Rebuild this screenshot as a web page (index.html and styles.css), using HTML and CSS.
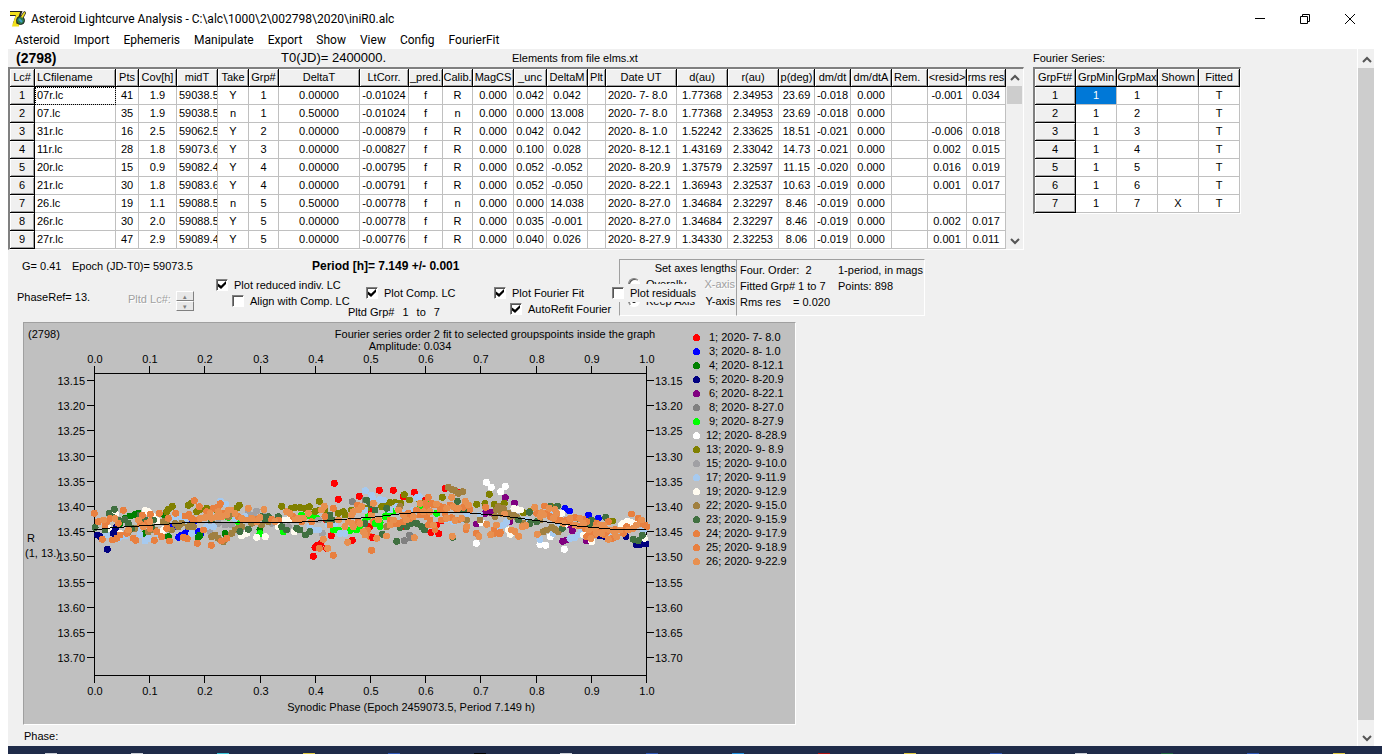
FILE: index.html
```html
<!DOCTYPE html>
<html lang="en">
<head>
<meta charset="utf-8">
<title>Asteroid Lightcurve Analysis</title>
<link rel="stylesheet" href="styles.css">
</head>
<body>
<div class="window">
  <header class="titlebar">
    <svg class="app-icon" viewBox="0 0 16 16" aria-hidden="true">
      <path d="M0 2.500h9L5 14" fill="none" stroke="#222" stroke-width="5"/>
      <path d="M0 2.500h8L4 14h5" fill="none" stroke="#f2e01c" stroke-width="3"/>
      <circle cx="10.500" cy="9.500" r="4" fill="#2c7a4b" stroke="#222"/>
      <path d="M9 8l3 3" stroke="#3fa0c8" stroke-width="2"/>
      <path d="M10.500 6l3.500-5.500 2 1L13 7" fill="#f2e01c" stroke="#222" stroke-width=".8"/>
    </svg>
    <h1 class="title">Asteroid Lightcurve Analysis - C:\alc\1000\2\002798\2020\iniR0.alc</h1>
    <div class="window-buttons">
      <button type="button" aria-label="Minimize"><svg viewBox="0 0 12 12"><path d="M1 5.500h10"/></svg></button>
      <button type="button" aria-label="Restore"><svg viewBox="0 0 12 12"><path d="M1.500 3.500h7v7h-7zM3.500 3.500v-2h7v7h-2"/></svg></button>
      <button type="button" aria-label="Close"><svg viewBox="0 0 12 12"><path d="M1 1l10 10M11 1L1 11"/></svg></button>
    </div>
  </header>
  <nav class="menubar">
    <button type="button">Asteroid</button><button type="button">Import</button><button type="button">Ephemeris</button><button type="button">Manipulate</button><button type="button">Export</button><button type="button">Show</button><button type="button">View</button><button type="button">Config</button><button type="button">FourierFit</button>
  </nav>
  <div class="client">
    <main class="content">
      <div class="tables">
        <section class="curves">
          <div class="heading">
            <strong class="object">(2798)</strong>
            <span class="epoch-zero">T0(JD)= 2400000.</span>
            <span>Elements from file elms.xt</span>
          </div>
          <div class="grid-frame">
            <table class="grid" id="curves"></table>
            <div class="scroll">
              <svg viewBox="0 0 17 17"><path d="M5 11l4-4 4 4"/></svg>
              <i class="short-thumb"></i>
              <svg viewBox="0 0 17 17"><path d="M5 7l4 4 4-4"/></svg>
            </div>
          </div>
        </section>
        <section class="series">
          <div class="heading">Fourier Series:</div>
          <div class="grid-frame">
            <table class="grid" id="series"></table>
          </div>
        </section>
      </div>

      <div class="controls">
        <div class="options">
          <div class="facts">
            <span>G= 0.41</span>
            <span>Epoch (JD-T0)= 59073.5</span>
            <strong class="period">Period [h]= 7.149 +/- 0.001</strong>
          </div>
          <div class="option-columns">
            <div class="phase-ref">
              <span class="ref">PhaseRef= 13.</span>
              <span class="disabled">Pltd Lc#:</span>
              <span class="spinner">
                <button type="button" disabled aria-label="Next curve">▴</button>
                <button type="button" disabled aria-label="Previous curve">▾</button>
              </span>
            </div>
            <div class="reduced">
              <label><input type="checkbox" checked>Plot reduced indiv. LC</label>
              <label class="sub"><input type="checkbox">Align with Comp. LC</label>
            </div>
            <div class="comp">
              <label class="inset"><input type="checkbox" checked>Plot Comp. LC</label>
              <span class="range"><span>Pltd Grp#</span><span>1</span><span>to</span><span>7</span></span>
            </div>
            <div class="fit">
              <label><input type="checkbox" checked>Plot Fourier Fit</label>
              <label class="sub"><input type="checkbox" checked>AutoRefit Fourier</label>
            </div>
          </div>
        </div>
        <fieldset class="axes">
          <div class="axes-title">Set axes lengths</div>
          <div class="axes-row"><label><input type="radio" name="axes">Overally</label><span class="disabled">X-axis</span></div>
          <div class="axes-row"><label><input type="radio" name="axes" checked>Keep Axis</label><span>Y-axis</span></div>
          <label class="residuals"><input type="checkbox">Plot residuals</label>
        </fieldset>
        <div class="summary">
          <span>Four. Order:&nbsp; 2</span><span>1-period, in mags</span>
          <span>Fitted Grp# 1 to 7</span><span>Points: 898</span>
          <span class="rms"><span>Rms res</span><span>= 0.020</span></span>
        </div>
      </div>

      <svg class="chart" id="chart" width="771" height="401" viewBox="0 0 771 401" role="img" aria-label="Composite lightcurve of 2798">
        <text x="4" y="15">(2798)</text>
        <text x="471" y="15" class="mid">Fourier series order 2 fit to selected groupspoints inside the graph</text>
        <text x="386" y="27" class="mid">Amplitude: 0.034</text>
        <text x="387" y="388" class="mid">Synodic Phase (Epoch 2459073.5, Period 7.149 h)</text>
        <text x="3" y="219">R</text>
        <text x="1" y="234">(1, 13.)</text>
        <g id="axes"></g>
        <g id="dots-left" transform="translate(61 157) scale(.3333)"></g>
        <g id="dots-right" transform="translate(346 147) scale(.3333)"></g>
        <path class="line" d="M70 207L86 205 115 203 145 201 171 199 278 199 310 197 351 194 375 191 399 189 425 189 446 190 479 193 523 199 553 203 586 206 622 206"/>
        <g id="legend"></g>
      </svg>
      <div class="status">Phase:</div>
    </main>
    <div class="scroll main-scroll">
      <svg viewBox="0 0 17 17"><path d="M5 11l4-4 4 4"/></svg>
      <i class="long-thumb"></i>
      <svg viewBox="0 0 17 17"><path d="M5 7l4 4 4-4"/></svg>
    </div>
  </div>
  <footer class="taskbar">
    <i class="pale"></i><i class="pale"></i><i class="cyan"></i><i class="gold"></i><i class="blue"></i><i class="black"></i><i class="pale"></i><i class="blue"></i><i class="sky"></i><i class="red"></i><i class="gold"></i><i class="blue"></i><i class="pale"></i><i class="green"></i><i class="blue"></i><i class="gold"></i>
  </footer>
</div>
<script src="app.js"></script>
</body>
</html>
```
FILE: styles.css
```css
* { box-sizing: border-box; }
body {
  margin: 0;
  background: #fff;
  color: #000;
  font: 11px/16px "Liberation Sans", Arial, sans-serif;
}
button { font: inherit; color: inherit; border: 0; padding: 0; background: none; }
.window { display: flex; flex-direction: column; height: 100vh; overflow: hidden; }

.titlebar { display: flex; align-items: center; flex: none; height: 32px; padding: 6px 10px 0; }
.app-icon { width: 16px; height: 16px; margin-right: 5px; }
.title { flex: 1; margin: 0; font: 12px/16px Roboto, "Noto Sans", sans-serif; white-space: nowrap; }
.window-buttons { display: flex; }
.window-buttons button { width: 45px; height: 20px; display: grid; place-items: center; }
.window-buttons svg { width: 12px; height: 12px; fill: none; stroke: #000; }
.menubar { display: flex; flex: none; gap: 14px; height: 17px; padding: 0 15px; font: 12px/17px Roboto, "Noto Sans", sans-serif; }

.client { display: flex; flex: 1; min-height: 0; margin: 0 8px; background: #f0f0f0; }
.content { flex: 1; min-width: 0; overflow: hidden; white-space: nowrap; }
.scroll { display: flex; flex-direction: column; flex: none; width: 17px; background: #f0f0f0; }
.scroll svg { width: 17px; height: 17px; fill: none; stroke: #555; stroke-width: 2; }
.scroll svg:last-child { margin-top: auto; }
.short-thumb { height: 18px; margin: 0 1px; background: #cdcdcd; }
.main-scroll { padding-top: 2px; border-left: 1px solid #fff; }
.long-thumb { flex: 1; margin-bottom: 9px; background: #cdcdcd; }

.tables { display: flex; align-items: flex-start; gap: 9px; }
.heading { display: flex; align-items: center; height: 18px; }
.curves .heading { padding-left: 8px; }
.object { width: 265px; font-size: 14px; }
.epoch-zero { width: 231px; font-size: 13px; }
.grid-frame { display: flex; width: max-content; border: solid #fff; border-width: 2px 1px 1px 2px; border-top-color: #808080; border-left-color: #808080; background: #fff; }
.grid { table-layout: fixed; border-collapse: separate; border-spacing: 0; width: max-content; }
.grid th, .grid td { height: 18px; padding: 0; overflow: hidden; font-weight: 400; line-height: 17px; text-align: center; white-space: pre; }
.grid td { border: solid #c0c0c0; border-width: 0 1px 1px 0; }
.grid th { border: solid #000; border-width: 0 1px 1px 0; background: #f0f0f0; box-shadow: inset 1px 1px #fff, inset -1px -1px #a0a0a0; }
.grid .left { padding-left: 2px; text-align: left; }
.grid .focus { outline: 1px dotted #000; outline-offset: -1px; }
.grid .selected { background: #0078d7; color: #fff; }

.controls { display: flex; align-items: flex-start; height: 72px; }
.options { width: 611px; padding-top: 8px; }
.facts { display: grid; grid-template-columns: 50px 240px auto; padding-left: 14px; }
.period { font-size: 12px; }
.option-columns { display: flex; margin-top: 3px; }
.phase-ref { display: flex; width: 208px; padding: 12px 0 0 9px; }
.ref { width: 111px; }
.disabled { color: #a0a0a0; text-shadow: 1px 1px #fff; }
.phase-ref .disabled { width: 48px; padding-top: 2px; }
.spinner { display: grid; width: 18px; height: 20px; margin-top: 2px; }
.spinner button { height: 10px; border: 1px solid; border-color: #fff #808080 #808080 #fff; background: #e8e8e8; color: #808080; font-size: 7px; line-height: 7px; }
.reduced { width: 132px; }
.comp { width: 146px; padding-top: 8px; }
.fit { padding-top: 8px; }
label { display: flex; align-items: center; gap: 6px; height: 16px; }
.sub { margin-left: 16px; }
.inset { margin-left: 18px; }
.range { display: flex; gap: 8px; margin-top: 3px; }
input { flex: none; appearance: none; width: 12px; height: 12px; margin: 0; border: 1px solid; border-color: #808080 #fff #fff #808080; background: #fff; box-shadow: inset 1px 1px #555; }
input[type="checkbox"]:checked::before { content: ""; display: block; width: 8px; height: 8px; margin: 1px; background: #000; clip-path: polygon(0 30%, 38% 60%, 100% 0, 100% 38%, 38% 100%, 0 68%); }
input[type="radio"] { border-radius: 50%; }
input[type="radio"]:checked::before { content: ""; display: block; width: 4px; height: 4px; margin: 3px; border-radius: 50%; background: #000; }
.axes { position: relative; width: 117px; height: 57px; min-width: 0; margin: 9px 0 0; padding: 0; border: solid #fff; border-width: 1px 0 1px 1px; border-top-color: #a0a0a0; border-left-color: #a0a0a0; }
.axes-title { height: 16px; text-align: right; }
.axes-row { display: flex; justify-content: space-between; height: 17px; padding: 0 1px 0 8px; }
.residuals { position: absolute; left: -8px; top: 24px; width: 84px; height: 18px; background: #f0f0f0; }
.summary { display: grid; grid-template-columns: 98px auto; align-content: start; height: 57px; margin-top: 9px; padding: 2px 1px 0 3px; border: 1px solid #fff; border-top-color: #a0a0a0; border-left-color: #a0a0a0; }
.rms { display: grid; grid-template-columns: 53px auto; }

.chart { display: block; box-sizing: content-box; margin-left: 15px; border: 1px solid #fff; border-top-color: #a0a0a0; border-left-color: #a0a0a0; background: #c0c0c0; white-space: pre; }
.mid { text-anchor: middle; }
.end { text-anchor: end; }
.line { fill: none; stroke: #000; shape-rendering: crispEdges; }
.dots { fill: none; stroke-width: 21; stroke-linecap: round; shape-rendering: crispEdges; }
.legend-dot { shape-rendering: crispEdges; }
.status { padding: 3px 0 0 16px; }

.taskbar { display: flex; align-items: flex-end; justify-content: space-around; flex: none; height: 8px; margin-left: 8px; background: #1f2b49; }
.taskbar i { width: 12px; height: 1px; }
.pale { background: #c8ccd4; }
.cyan { background: #38c4d8; }
.gold { background: #e0c840; }
.blue { background: #3058b8; }
.black { background: #000; }
.sky { background: #2090e0; }
.red { background: #b01010; }
.green { background: #206840; }
```
FILE: app.js
```js
const curveColumns = [
  ['Lc#', 25], ['LCfilename', 81, 1], ['Pts', 23], ['Cov[h]', 38], ['midT', 41], ['Take', 31], ['Grp#', 30],
  ['DeltaT', 81], ['LtCorr.', 49], ['_pred.', 34], ['Calib.', 30], ['MagCS', 41], ['_unc', 33], ['DeltaM', 41],
  ['Plt', 18], ['Date UT', 71], ['d(au)', 51], ['r(au)', 51], ['p(deg)', 36], ['dm/dt', 36], ['dm/dtA', 41],
  ['Rem.', 36, 1], ['<resid>', 39], ['rms res', 39]
];
const curveRows = `
1|07r.lc|41|1.9|59038.5|Y|1|0.00000|-0.01024|f|R|0.000|0.042|0.042||2020- 7- 8.0|1.77368|2.34953|23.69|-0.018|0.000||-0.001|0.034
2|07.lc|35|1.9|59038.5|n|1|0.50000|-0.01024|f|n|0.000|0.000|13.008||2020- 7- 8.0|1.77368|2.34953|23.69|-0.018|0.000|||
3|31r.lc|16|2.5|59062.5|Y|2|0.00000|-0.00879|f|R|0.000|0.042|0.042||2020- 8- 1.0|1.52242|2.33625|18.51|-0.021|0.000||-0.006|0.018
4|11r.lc|28|1.8|59073.6|Y|3|0.00000|-0.00827|f|R|0.000|0.100|0.028||2020- 8-12.1|1.43169|2.33042|14.73|-0.021|0.000||0.002|0.015
5|20r.lc|15|0.9|59082.4|Y|4|0.00000|-0.00795|f|R|0.000|0.052|-0.052||2020- 8-20.9|1.37579|2.32597|11.15|-0.020|0.000||0.016|0.019
6|21r.lc|30|1.8|59083.6|Y|4|0.00000|-0.00791|f|R|0.000|0.052|-0.050||2020- 8-22.1|1.36943|2.32537|10.63|-0.019|0.000||0.001|0.017
7|26.lc|19|1.1|59088.5|n|5|0.50000|-0.00778|f|n|0.000|0.000|14.038||2020- 8-27.0|1.34684|2.32297|8.46|-0.019|0.000|||
8|26r.lc|30|2.0|59088.5|Y|5|0.00000|-0.00778|f|R|0.000|0.035|-0.001||2020- 8-27.0|1.34684|2.32297|8.46|-0.019|0.000||0.002|0.017
9|27r.lc|47|2.9|59089.4|Y|5|0.00000|-0.00776|f|R|0.000|0.040|0.026||2020- 8-27.9|1.34330|2.32253|8.06|-0.019|0.000||0.001|0.011`;
const seriesColumns = [['GrpFt#', 41], ['GrpMin', 41], ['GrpMax', 41], ['Shown', 41], ['Fitted', 41]];
const seriesRows = '1|1|1||T\n2|1|2||T\n3|1|3||T\n4|1|4||T\n5|1|5||T\n6|1|6||T\n7|1|7|X|T';

const leftAligned = new Set(['LCfilename', 'midT', 'Date UT', 'Rem.']);
const escape = s => s.replace(/</g, '&lt;').replace(/>/g, '&gt;');

function fillTable(id, columns, rows, activeClass) {
  const cols = columns.map(c => `<col style="width:${c[1]}px">`).join('');
  const head = columns.map(c => `<th scope="col"${c[2] ? ' class="left"' : ''}>${escape(c[0])}</th>`).join('');
  const body = rows.trim().split('\n').map((row, r) => '<tr>' + row.split('|').map((v, i) => {
    if (i === 0) return `<th scope="row">${v}</th>`;
    const names = [leftAligned.has(columns[i][0]) ? 'left' : '', r === 0 && i === 1 ? activeClass : ''].join(' ').trim();
    return `<td${names ? ` class="${names}"` : ''}>${v}</td>`;
  }).join('') + '</tr>').join('');
  const table = document.getElementById(id);
  table.style.width = columns.reduce((sum, c) => sum + c[1], 0) + 'px';
  table.innerHTML = `<colgroup>${cols}</colgroup><thead><tr>${head}</tr></thead><tbody>${body}</tbody>`;
}
fillTable('curves', curveColumns, curveRows, 'focus');
fillTable('series', seriesColumns, seriesRows, 'selected');

/* Axes: frame, ticks and tick labels */
let axes = '<path class="line" d="M70.500 50.500h552v302h-552z"/>';
for (let i = 0; i <= 10; i++) {
  const x = Math.round(70 + i * 55.2);
  const label = (i / 10).toFixed(1);
  axes += `<path class="line" d="M${x + 0.5} 43v7M${x + 0.5} 352v8"/><text class="mid" x="${x + 1}" y="40">${label}</text><text class="mid" x="${x + 1}" y="372">${label}</text>`;
}
for (let i = 0; i < 12; i++) {
  const y = Math.round(57 + i * 25.2);
  const label = (13.15 + i * 0.05).toFixed(2);
  axes += `<path class="line" d="M63 ${y + 0.5}h7M623 ${y + 0.5}h7"/><text class="end" x="61" y="${y + 5}">${label}</text><text x="631" y="${y + 5}">${label}</text>`;
}
document.getElementById('axes').innerHTML = axes;

const legend = [
  ['#f00', ' 1; 2020- 7- 8.0'], ['#00f', ' 3; 2020- 8- 1.0'], ['#008000', ' 4; 2020- 8-12.1'],
  ['#000080', ' 5; 2020- 8-20.9'], ['#800080', ' 6; 2020- 8-22.1'], ['#808080', ' 8; 2020- 8-27.0'],
  ['#0f0', ' 9; 2020- 8-27.9'], ['#fff', '12; 2020- 8-28.9'], ['#808000', '13; 2020- 9- 8.9'],
  ['#a0a0a4', '15; 2020- 9-10.0'], ['#a6caf0', '17; 2020- 9-11.9'], ['#fffbf0', '19; 2020- 9-12.9'],
  ['#a08040', '22; 2020- 9-15.0'], ['#407040', '23; 2020- 9-15.9'], ['#e88040', '24; 2020- 9-17.9'],
  ['#e88040', '25; 2020- 9-18.9'], ['#e89050', '26; 2020- 9-22.9']
];
document.getElementById('legend').innerHTML = legend.map(([color, text], i) => {
  const y = 14 + i * 14;
  return `<circle class="legend-dot" cx="672.5" cy="${y + 0.5}" r="3.5" fill="${color}"/><text x="${text[0] === ' ' ? 685 : 682}" y="${y + 4}">${text.trim()}</text>`;
}).join('');

/* Observations by colour, as "x,y" pairs in thirds of a pixel */
const left = [
  ['#f00', '748,10 760,58 823,49 739,167 802,181 685,229 698,195 708,190 725,205 862,173 850,90 725,120 855,140 690,202'],
  ['#00f', '265,140 281,172 300,160 310,150 320,130 328,122 340,155 347,160 290,165'],
  ['#008000', '120,115 135,108 150,104 160,100 105,130 180,160 240,110 345,165 340,172 420,160 525,148 250,170'],
  ['#000080', '67,208 38,165 45,170 85,160 90,150 93,143'],
  ['#808080', '802,65 840,60'],
  ['#0f0', '405,110 430,112 460,125 525,160 590,125 595,155 650,105 665,108 680,113 695,115 745,150 760,150 795,152 815,150 825,145 840,125 850,110 470,150'],
  ['#808000', '250,88 262,79 310,76 318,70 347,88 245,95 365,85 335,95 395,90 463,76 455,85 590,79 618,86 630,82 645,83 673,80 660,85 703,64 705,90 690,95 720,88 760,100 775,95 800,90 820,85 780,105 845,85'],
  ['#a0a0a4', '515,93 375,155 380,135 400,130 420,135 485,150 540,110 560,130 610,140 700,120 712,160 490,100 440,135 505,105 590,135'],
  ['#a6caf0', '406,63 421,72 841,32 180,183 190,175 150,178 220,160 120,168 65,165 290,110 270,115 300,125 365,140 385,140 480,110 500,120 700,150 675,140 690,150 765,160 780,160 860,45 840,90 320,160 450,115 100,175 160,145 165,165 730,135 750,130'],
  ['#fffbf0', '75,100 92,102 190,95 217,122 237,148 70,145 180,92 230,155 205,110 470,168 515,172 541,170 485,160 600,120 628,155 580,140 612,118 105,160'],
  ['#a08040', '235,125 290,130 310,140 320,135 390,165 400,175 440,160 450,150 470,140 445,100 430,110 260,150 380,170 415,185 530,135 550,125 170,130 210,150 280,140 325,140 130,155 500,130 245,130 270,130 150,145 190,155 460,145'],
  ['#407040', '88,88 72,100 30,142 80,110 165,105 120,118 100,120 140,145 205,120 180,120 60,150 490,148 465,155 550,110 580,110 570,120 590,140 605,150 635,145 645,150 662,165 675,155 735,105 725,118 743,120 845,60 855,70 840,130 380,120 530,110 540,120 130,130 200,140'],
  ['#e88040', '28,100 115,91 172,106 196,103 223,100 328,62 343,80 406,71 337,190 379,196 253,183 208,181 152,181 83,180 52,178 355,150 272,100 250,115 410,183 425,175 40,125 65,125 75,115 100,130 95,175 105,165 125,160 145,175 165,130 195,145 215,155 230,170 245,145 60,135 300,108 312,104 295,172 307,176 365,95 385,85 415,100 400,80 460,110 510,118 560,118 580,120 625,110 650,125 680,125 720,110 735,135 745,85 703,205 745,226 820,125 817,75 848,150 855,170 865,125 185,130 335,120 320,115'],
  ['#e89050', '537,88 490,85 438,90 718,79 710,90 670,100 55,120 90,115 130,150 175,140 195,125 160,120 345,115 375,100 400,95 425,105 360,112 380,115 430,90 450,100 395,110 470,115 500,115 525,112 515,125 570,125 605,95 615,100 640,115 630,120 760,120 715,178 728,205 788,187 859,211 780,140 790,125 800,130 800,105 805,95 820,90 830,80 805,140 825,130 835,155 840,165 860,105 410,110 485,120 655,115']
];
const right = [
  ['#f00', '28,61 70,61 133,67 225,55 183,188 206,191 213,153 8,202 95,170 265,68 160,90 100,80 200,165'],
  ['#00f', '585,115 598,123 655,135 685,145'],
  ['#000080', '800,225 812,223 828,222 705,200 768,200 690,198'],
  ['#800080', '406,83 433,99 578,214 607,182 345,130 352,125 365,128 385,115 650,213 420,155 290,118 320,162 590,210 645,195 600,165'],
  ['#808080', '103,212 118,195 120,202'],
  ['#0f0', '15,160 30,158 45,140 70,125 150,115 165,105 55,130 200,130 30,170 175,100'],
  ['#fff', '349,37 364,52 406,49 392,65 319,220 583,238 510,223 527,226 541,200 335,158 770,155'],
  ['#808000', '103,74 118,90 217,82 60,98 75,98 92,100 45,105 320,103 345,101 373,103 403,100 358,73 445,120 460,128 395,110 545,110 728,153 480,125 150,95 35,110'],
  ['#a6caf0', '40,90 10,88 140,83 148,80 80,110 100,130 510,208 600,205 615,202 625,195 400,165 385,175 410,155 300,125 330,135 820,180 550,190 570,160 565,150 470,150 230,150 250,155 280,150 30,88 130,120 60,120 635,185 640,180 290,135 545,125 720,185'],
  ['#fffbf0', '440,118 452,120 432,115 421,193 665,215 586,163 760,160 775,155 575,130 415,180 823,205 640,195 755,165 785,158 792,160'],
  ['#a08040', '235,52 245,58 255,62 265,70 278,65 385,110 400,115 415,130 430,135 440,142 395,130 530,180 545,172 555,178 565,185 460,160 375,140 380,120 420,140 520,185 330,150 290,150 510,150 90,110 50,170'],
  ['#407040', '262,94 80,214 248,202 37,193 562,108 478,127 577,175 707,142 5,105 50,115 110,170 140,160 155,170 163,180 90,172 280,120 445,150 500,155 540,110 480,160 670,155 660,165 665,150 790,208 805,212 817,196 125,160 15,120 625,145'],
  ['#e88040', '5,241 175,82 319,190 374,190 391,187 372,180 388,192 523,108 347,112 215,150 245,143 266,150 288,178 190,105 208,108 220,112 185,100 165,100 140,120 170,115 210,120 225,130 260,118 280,112 300,118 240,105 170,140 150,135 120,145 180,150 175,165 195,178 85,160 100,155 60,150 75,160 115,130 500,130 530,130 540,140 560,148 570,150 590,150 615,143 640,148 600,158 625,168 650,155 645,175 660,190 690,170 680,160 650,200 672,195 710,185 735,178 765,182 728,205 705,195 760,190 770,170 715,155 785,132 805,145 810,160 825,165 830,170'],
  ['#e89050', '133,203 247,199 245,82 286,94 327,199 362,194 446,199 435,185 425,180 502,193 494,112 538,115 555,118 457,170 468,167 380,165 350,163 404,132 230,145 255,152 275,145 290,170 200,102 230,115 150,100 180,125 250,110 295,105 265,115 160,125 130,140 110,150 190,165 70,150 60,165 100,135 85,120 20,205 50,198 10,100 25,150 515,128 550,145 510,140 580,160 600,145 630,145 520,135 615,165 640,160 560,130 655,180 675,175 700,165 663,205 695,190 720,180 750,180 740,200 715,208 735,190 775,180 690,165 815,150 800,165 790,175 680,190 705,175']
];
const dots = groups => groups.map(([color, pairs]) =>
  `<path class="dots" stroke="${color}" d="${pairs.split(' ').map(p => `M${p}h.1`).join('')}"/>`).join('');
document.getElementById('dots-left').innerHTML = dots(left);
document.getElementById('dots-right').innerHTML = dots(right);
```
